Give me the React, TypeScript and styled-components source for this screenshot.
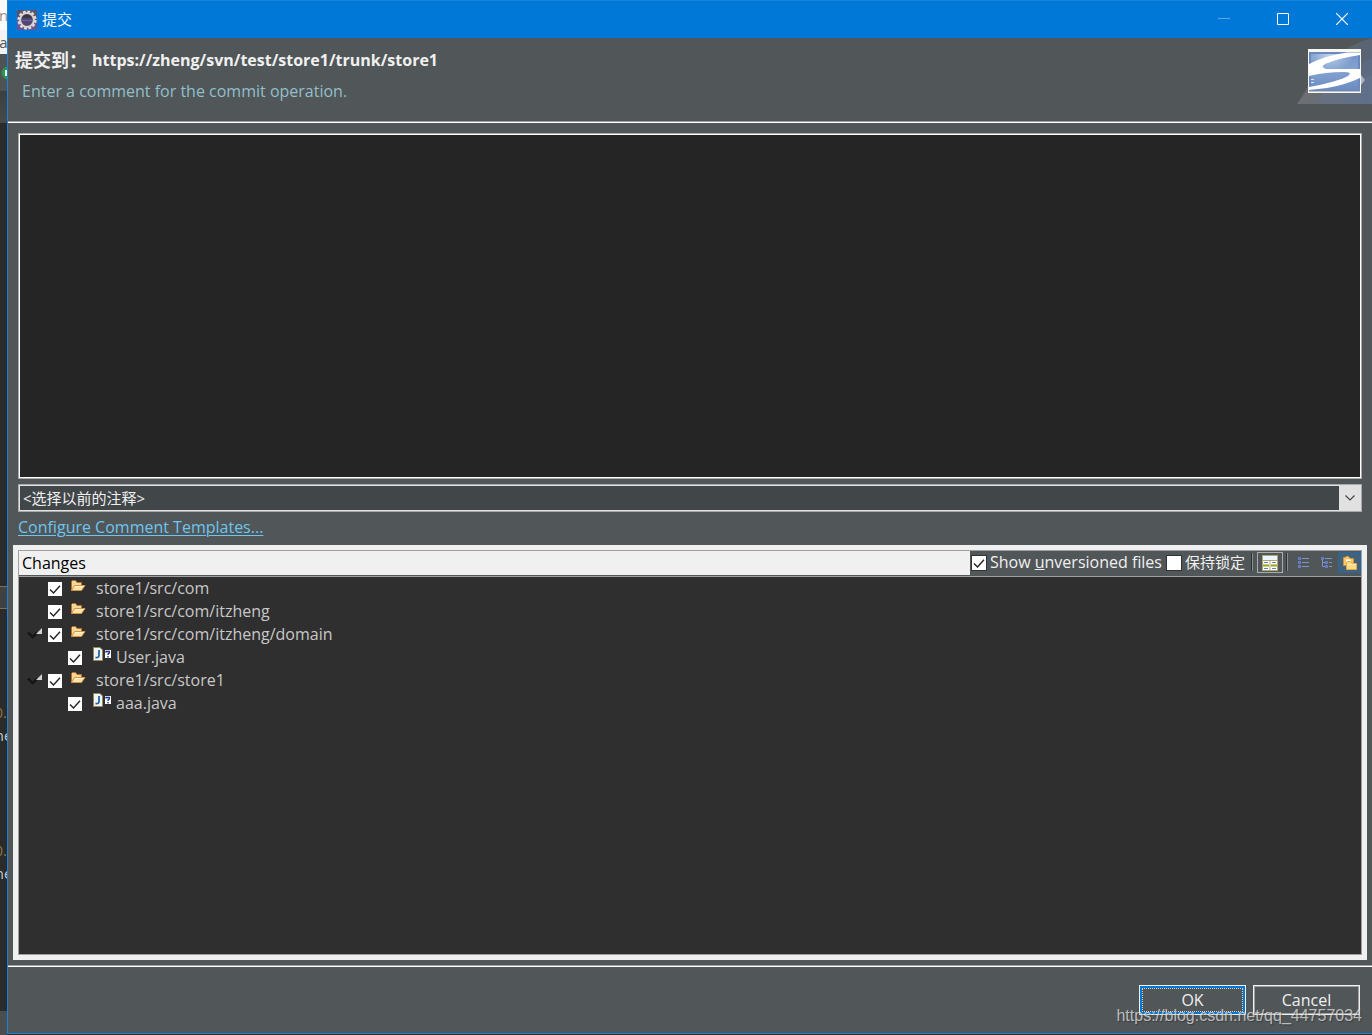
import React, { useState } from "react";
import styled, { createGlobalStyle, css } from "styled-components";

const uiFont = '"Open Sans", "Noto Sans CJK SC", sans-serif';

const GlobalStyle = createGlobalStyle`
  *, *::before, *::after { box-sizing: border-box; }
  body { margin: 0; background: #2b2b2b; font: 16px/23px ${uiFont}; color: #f0f0f0; }
  button, input, select, textarea { margin: 0; padding: 0; border-radius: 0; font: inherit; color: inherit; }
`;

const Screen = styled.div`
  display: flex;
  height: 100vh;
  min-height: 640px;
  overflow: hidden;
  position: relative;
`;

/* The sliver of the editor window that shows behind the dialog */
const Backdrop = styled.div`
  width: 7px;
  flex: none;
  display: flex;
  flex-direction: column;
  overflow: hidden;
  font-size: 15px;
`;

const Slab = styled.div<{ $h?: number; $bg: string; $ink?: string; $lined?: boolean; $end?: boolean }>`
  ${(p) => (p.$h ? css`flex: none; height: ${p.$h}px;` : css`flex: 1;`)}
  background: ${(p) => p.$bg};
  color: ${(p) => p.$ink || "#c8c8c8"};
  ${(p) => p.$lined && css`border: solid #77735a; border-width: 1px 0;`}
  display: flex;
  align-items: center;
  justify-content: ${(p) => (p.$end ? "flex-end" : "center")};
`;

const Dialog = styled.main`
  flex: 1;
  min-width: 0;
  display: flex;
  flex-direction: column;
  background: #515658;
  border: solid #1883d7;
  border-width: 1px 0 1px 1px;
  margin-bottom: 1px;
`;

const TitleBar = styled.header`
  height: 37px;
  flex: none;
  display: flex;
  align-items: center;
  gap: 5px;
  padding-left: 9px;
  background: #0078d7;
  color: #fff;
`;

const Caption = styled.span`
  flex: 1;
  font-size: 15px;
`;

const WindowControls = styled.div`
  display: flex;
`;

const WindowButton = styled.button`
  width: 59px;
  height: 37px;
  padding: 0 1px 1px 0;
  border: 0;
  background: none;
  display: grid;
  place-items: center;
  &:disabled { opacity: 0.35; }
`;

const Banner = styled.section`
  height: 83px;
  flex: none;
  display: flex;
  justify-content: space-between;
`;

const BannerText = styled.div`
  padding: 10px 0 0 7px;
`;

const Heading = styled.h1`
  display: flex;
  gap: 5px;
  margin: 0;
  font-size: 16px;
  line-height: 24px;
  font-weight: 700;
`;

const HeadingLabel = styled.span`
  font-size: 18px;
`;

const Hint = styled.p`
  margin: 8px 0 0 7px;
  color: #93bfca;
`;

const Rule = styled.hr`
  flex: none;
  width: 100%;
  height: 2px;
  margin: 0;
  border: solid;
  border-color: #a0a0a0 transparent #fff;
  border-width: 1px 0;
`;

const Content = styled.section`
  flex: 1;
  min-height: 0;
  display: grid;
  grid-template-rows: minmax(0, 346fr) 33px 33px minmax(0, 415fr);
  padding: 10px 5px 5px;
`;

const Field = styled.div`
  border: 1px solid #a9a9a9;
  margin: 0 5px;
`;

const CommentField = styled(Field)`
  display: flex;
`;

const Comment = styled.textarea`
  flex: 1;
  border: 1px solid #fff;
  padding: 2px;
  background: #252525;
  outline: 0;
  resize: none;
`;

const HistoryField = styled(Field)`
  margin-top: 5px;
  display: grid;
  grid-template-columns: 1fr 22px;
`;

const History = styled.select`
  grid-area: 1 / 1 / 2 / 3;
  appearance: none;
  border: 1px solid #e3e3e3;
  padding: 0 3px;
  background: #414649;
  outline: 0;
  font-size: 15px;
`;

const HistoryArrow = styled.span`
  grid-area: 1 / 2;
  display: grid;
  place-items: center;
  background: #e1e1e1;
  pointer-events: none;
`;

const TemplateRow = styled.div`
  padding: 4px 5px 0;
`;

const TemplateLink = styled.a`
  color: #6fc5ee;
  text-underline-offset: 2px;
  text-decoration-thickness: 1px;
`;

const ChangesPanel = styled.section`
  display: flex;
  background: #f0f0f0;
  padding: 5px;
`;

const ChangesFrame = styled.div`
  flex: 1;
  display: flex;
  flex-direction: column;
  border: 1px solid #a0a0a0;
  background: #2f2f2f;
`;

const ChangesHeader = styled.div`
  height: 26px;
  flex: none;
  display: flex;
  border-bottom: 1px solid #a0a0a0;
  background: #515658;
`;

const ChangesTitle = styled.h2`
  flex: 1;
  margin: 0;
  padding: 1px 3px 0;
  border-bottom: 1px solid #515658;
  background: #f0f0f0;
  color: #000;
  font-size: 16px;
  line-height: 23px;
  font-weight: 400;
`;

const Toolbar = styled.div`
  display: flex;
  align-items: flex-start;
  padding-left: 1px;
`;

const Option = styled.label`
  display: flex;
  align-items: center;
  gap: 3px;
  margin-right: 4px;
`;

const CjkText = styled.span`
  font-size: 15px;
`;

const CheckCell = styled.span<{ $size: number }>`
  flex: none;
  display: grid;
  place-items: center;
  width: ${(p) => p.$size}px;
  height: ${(p) => p.$size}px;
  > * { grid-area: 1 / 1; }
`;

const CheckInput = styled.input<{ $framed?: boolean }>`
  appearance: none;
  width: 100%;
  height: 100%;
  background: #fff;
  border: ${(p) => (p.$framed ? "1px solid #333" : "0")};
  & + svg { visibility: hidden; pointer-events: none; }
  &:checked + svg { visibility: visible; }
`;

const Divider = styled.span`
  width: 2px;
  height: 18px;
  margin: 2px 4px 0 2px;
  background: linear-gradient(to right, #303030 50%, #8a8d8f 50%);
`;

const ToolButton = styled.button<{ $look?: "framed" | "active" }>`
  display: grid;
  place-items: center;
  width: ${(p) => (p.$look === "framed" ? 26 : 23)}px;
  height: 21px;
  margin-top: 1px;
  border: 0 solid;
  background: none;
  ${(p) => p.$look === "framed" && css`margin-right: 1px; border: 1px solid #a9acad;`}
  ${(p) => p.$look === "active" && css`border: 1px solid #2a6699; background: #42617a;`}
`;

const Tree = styled.ul`
  list-style: none;
  margin: 0;
  padding: 0;
`;

const Row = styled.div<{ $depth: number }>`
  height: 23px;
  display: flex;
  align-items: center;
  padding-left: ${(p) => 8 + p.$depth * 20}px;
  color: #c8c8c8;
`;

const Twisty = styled.span`
  width: 21px;
  height: 23px;
  flex: none;
`;

const TwistyButton = styled.button`
  width: 21px;
  height: 23px;
  flex: none;
  border: 0;
  background: none;
  display: flex;
  justify-content: flex-start;
`;

const RowLabel = styled.label`
  display: flex;
  align-items: center;
  height: 23px;
`;

const RowIcon = styled.span`
  width: 26px;
  height: 23px;
  margin: 0 0 0 8px;
  svg { display: block; }
`;

const Footer = styled.footer`
  height: 66px;
  flex: none;
  display: flex;
  justify-content: flex-end;
  align-items: flex-start;
  gap: 7px;
  padding: 18px 12px 0;
`;

const ActionButton = styled.button<{ $primary?: boolean }>`
  width: 107px;
  height: 30px;
  padding: 1px;
  border: 1px solid #f0f0f0;
  background: #515658;
  box-shadow: inset 0 0 0 ${(p) => (p.$primary ? "2px #0078d7" : "1px #a0a0a0")};
`;

const FocusRing = styled.span<{ $on?: boolean }>`
  display: block;
  height: 26px;
  line-height: 26px;
  ${(p) => p.$on && css`height: 24px; line-height: 22px; margin: 0 1px; border: 1px dotted #d0d0d0;`}
`;

const Watermark = styled.span`
  position: absolute;
  right: 10px;
  bottom: 7px;
  font: 16px/24px "Liberation Sans", sans-serif;
  color: rgba(225, 225, 225, 0.75);
  text-shadow: 1px 1px 1px rgba(0, 0, 0, 0.3);
  pointer-events: none;
`;

function EclipseIcon() {
  return (
    <svg width="20" height="20" viewBox="0 0 20 20">
      <rect width="20" height="20" fill="#66549a" />
      <rect width="20" height="7" fill="#59536f" />
      <circle cx="10" cy="10" r="8.4" fill="none" stroke="#e2dcd2" strokeWidth="2.4" strokeDasharray="2.8 1.6" />
      <circle cx="10" cy="10" r="6.9" fill="#514776" stroke="#d8d4cd" strokeWidth="2" />
      <path d="M5 8a5.3 5.3 0 0 1 10 0z" fill="#3a3746" />
      <path d="M5 10.500h10" stroke="#6c6294" />
    </svg>
  );
}

function SubversiveLogo() {
  return (
    <svg width="75" height="66" viewBox="0 0 75 66">
      <defs>
        <linearGradient id="beam" x1="0" x2="1">
          <stop offset="0" stopColor="#737678" />
          <stop offset="0.5" stopColor="#676d76" />
          <stop offset="1" stopColor="#5d6c88" />
        </linearGradient>
        <linearGradient id="plate" x1="0" y1="0" x2="0" y2="1">
          <stop offset="0" stopColor="#7397c9" />
          <stop offset="0.45" stopColor="#86a3d0" />
          <stop offset="1" stopColor="#6c8dc3" />
        </linearGradient>
        <radialGradient id="glow" cx="0.4" cy="0" r="0.5">
          <stop offset="0" stopColor="#c1d3ec" />
          <stop offset="1" stopColor="#c1d3ec" stopOpacity="0" />
        </radialGradient>
      </defs>
      <path d="M0 66L20 34Q46 8 75 0V66z" fill="url(#beam)" opacity="0.6" />
      <path d="M0 66L22 40L75 21V66z" fill="url(#beam)" opacity="0.7" />
      <path d="M21 66L30 45L75 38V66z" fill="#677896" opacity="0.4" />
      <path d="M64 37l4 5l-4 5z" fill="#a9b5c8" />
      <rect x="11" y="11" width="53" height="44" fill="#f8f7f2" />
      <rect x="12" y="14" width="51" height="39" fill="#6b89bd" />
      <rect x="14" y="16" width="47" height="35" fill="url(#plate)" />
      <rect x="14" y="16" width="47" height="35" fill="url(#glow)" />
      <path
        d="M12 26Q30 17 50 14.500H63V17Q42 20 28 26Q23 29 29 31H63V40Q48 47 30 50L12 52V49Q40 44 51 38Q56 34 47 34Q28 34 12 38z"
        fill="#fff"
      />
      <path d="M14 41.500h3M14 44.500h3" stroke="#dce6f4" />
      <path d="M12 53.500h51" stroke="#c3c3be" />
    </svg>
  );
}

function Tick() {
  return (
    <svg width="14" height="14" viewBox="0 0 14 14">
      <path d="M2 7.500l3.500 3.500L12 3.800" fill="none" stroke="#222" strokeWidth="1.400" />
    </svg>
  );
}

function FolderIcon() {
  return (
    <svg width="16" height="23" viewBox="0 0 16 23">
      <path d="M1.500 13.500V4.500L2.500 3.500H5.500L7 5.500H11.500V8" fill="#f7d695" stroke="#b4712c" />
      <path d="M1.500 13.500L4.500 8.500H15L11.500 13.500z" fill="#ffe3a2" stroke="#d2944a" />
      <path d="M5 9.500h8.500" stroke="#fff4cf" />
    </svg>
  );
}

function JavaFileIcon() {
  return (
    <svg width="22" height="23" viewBox="0 0 22 23">
      <path d="M3.500 1.500H10L12.500 4V14.500H3.500z" fill="#eef5fd" stroke="#9a8850" />
      <path d="M9 4V9.500Q9 12 5.500 11.500" fill="none" stroke="#2c6597" strokeWidth="1.800" />
      <rect x="15" y="4" width="6" height="8" fill="#fff" />
      <path d="M16 6.500V5.500H19.300V7L18 8V9M18 10v1.500" fill="none" stroke="#1c2f96" strokeWidth="1.400" />
    </svg>
  );
}

function ExpandedIcon() {
  return (
    <svg width="16" height="23" viewBox="0 0 16 23">
      <path d="M1 9.500l4.500 4.500l5-4.500" fill="none" stroke="#151515" strokeWidth="2.400" />
      <path d="M15 5v6H9z" fill="#d2d2d2" />
    </svg>
  );
}

function CompareIcon() {
  return (
    <svg width="16" height="16" viewBox="0 0 16 16">
      <rect width="16" height="16" fill="#b1a878" />
      <rect x="1" y="1" width="14" height="4" fill="#eaf6fc" />
      <path d="M1 6h6.500v9H1zM8.500 6H15v9H8.500z" fill="#fff" />
      <path d="M2 7.500h4M10 7.500h4M2 13.500h4M10 13.500h4" stroke="#638cab" />
      <path d="M1 10.500h6M9 10.500h6" stroke="#96a614" strokeWidth="2" />
    </svg>
  );
}

function FlatIcon() {
  return (
    <svg width="12" height="13" viewBox="0 0 12 13">
      <path d="M0 1h3v3H0zM0 5h3v3H0zM0 9h3v3H0z" fill="#637bc0" />
      <path d="M4 2.500h7M4 6.500h7M4 10.500h7" stroke="#7e96bd" />
    </svg>
  );
}

function HierarchyIcon() {
  return (
    <svg width="12" height="13" viewBox="0 0 12 13">
      <path d="M0 1h3v3H0zM4 5h3v3H4zM4 9h3v3H4z" fill="#637bc0" />
      <path d="M4 2.500h7M8 6.500h3M8 10.500h3M1.500 4v6.500H4M1.500 6.500H4" fill="none" stroke="#7e96bd" />
    </svg>
  );
}

function CompressedIcon() {
  return (
    <svg width="16" height="16" viewBox="0 0 16 16">
      <path d="M1.500 10.500V2.500H3L4 1.500H6.500L8 3.500H11.500V10.500z" fill="#f7c76b" stroke="#d2933d" />
      <path d="M4 5.500h5" stroke="#fff" strokeWidth="2" />
      <path d="M4.500 14.500V7.500L5.500 6.500H8.500L10 8.500H14.500V14.500z" fill="#ffdb82" stroke="#e8aa48" />
      <path d="M5 9.500h9" stroke="#fff1b6" />
    </svg>
  );
}

type CheckProps = { size: number; framed?: boolean; initial?: boolean; id?: string };

function Check({ size, framed, initial = false, id }: CheckProps) {
  const [on, setOn] = useState(initial);
  return (
    <CheckCell $size={size}>
      <CheckInput id={id} type="checkbox" $framed={framed} checked={on} onChange={() => setOn(!on)} />
      <Tick />
    </CheckCell>
  );
}

type Node = { name: string; children?: Node[] };

const changes: Node[] = [
  { name: "store1/src/com", children: [] },
  { name: "store1/src/com/itzheng", children: [] },
  { name: "store1/src/com/itzheng/domain", children: [{ name: "User.java" }] },
  { name: "store1/src/store1", children: [{ name: "aaa.java" }] },
];

function TreeItem({ node, depth = 0 }: { node: Node; depth?: number }) {
  const [open, setOpen] = useState(true);
  const hasChildren = !!node.children?.length;
  return (
    <li>
      <Row $depth={depth}>
        {hasChildren ? (
          <TwistyButton type="button" aria-expanded={open} aria-label={node.name} onClick={() => setOpen(!open)}>
            <ExpandedIcon />
          </TwistyButton>
        ) : (
          <Twisty />
        )}
        <Check size={14} initial id={node.name} />
        <RowLabel htmlFor={node.name}>
          <RowIcon>{node.children ? <FolderIcon /> : <JavaFileIcon />}</RowIcon>
          {node.name}
        </RowLabel>
      </Row>
      {hasChildren && open && (
        <Tree>
          {node.children!.map((child) => (
            <TreeItem key={child.name} node={child} depth={depth + 1} />
          ))}
        </Tree>
      )}
    </li>
  );
}

export default function App() {
  return (
    <Screen>
      <GlobalStyle />
      <Backdrop aria-hidden="true">
        <Slab $h={30} $bg="#fafafa" $ink="#a08c86">n</Slab>
        <Slab $h={24} $bg="#f2f2f2" $ink="#555">a</Slab>
        <Slab $h={37} $bg="#4f5355">
          <svg width="7" height="14" viewBox="0 0 7 14">
            <circle cx="8" cy="7" r="6.500" fill="#2f9447" />
            <path d="M6 4v6" stroke="#e6f5e8" strokeWidth="2" />
          </svg>
        </Slab>
        <Slab $h={32} $bg="linear-gradient(#3c3f41, #47494b)" />
        <Slab $h={463} $bg="#2b2b2b" />
        <Slab $h={23} $bg="#414141" $lined />
        <Slab $h={92} $bg="#2b2b2b" />
        <Slab $h={23} $bg="#2b2b2b" $ink="#8c7440" $end>0.</Slab>
        <Slab $h={23} $bg="#2b2b2b">ne</Slab>
        <Slab $h={92} $bg="#2b2b2b" />
        <Slab $h={23} $bg="#2b2b2b" $ink="#8c7440" $end>0.</Slab>
        <Slab $h={23} $bg="#2b2b2b">ne</Slab>
        <Slab $bg="#2b2b2b" />
        <Slab $h={24} $bg="#4a4e50" />
      </Backdrop>

      <Dialog>
        <TitleBar>
          <EclipseIcon />
          <Caption>提交</Caption>
          <WindowControls>
            <WindowButton type="button" disabled aria-label="Minimize">
              <svg width="12" height="12"><path d="M0 5.500h12" stroke="#fff" /></svg>
            </WindowButton>
            <WindowButton type="button" aria-label="Maximize">
              <svg width="12" height="12"><path d="M.5.5h11v11H.5z" fill="none" stroke="#fff" /></svg>
            </WindowButton>
            <WindowButton type="button" aria-label="Close">
              <svg width="12" height="12"><path d="M0 0l12 12M12 0L0 12" stroke="#fff" strokeWidth="1.200" /></svg>
            </WindowButton>
          </WindowControls>
        </TitleBar>

        <Banner>
          <BannerText>
            <Heading>
              <HeadingLabel>提交到：</HeadingLabel>
              <span>https://zheng/svn/test/store1/trunk/store1</span>
            </Heading>
            <Hint>Enter a comment for the commit operation.</Hint>
          </BannerText>
          <SubversiveLogo />
        </Banner>
        <Rule />

        <Content>
          <CommentField>
            <Comment aria-label="Comment" />
          </CommentField>
          <HistoryField>
            <History aria-label="Previous comments">
              <option>&lt;选择以前的注释&gt;</option>
            </History>
            <HistoryArrow>
              <svg width="10" height="6"><path d="M.5.5L5 5L9.500.5" fill="none" stroke="#444" strokeWidth="1.200" /></svg>
            </HistoryArrow>
          </HistoryField>
          <TemplateRow>
            <TemplateLink href="#templates">Configure Comment Templates...</TemplateLink>
          </TemplateRow>

          <ChangesPanel>
            <ChangesFrame>
              <ChangesHeader>
                <ChangesTitle>Changes</ChangesTitle>
                <Toolbar>
                  <Option>
                    <Check size={16} framed initial />
                    <span>Show <u>u</u>nversioned files</span>
                  </Option>
                  <Option>
                    <Check size={16} framed />
                    <CjkText>保持锁定</CjkText>
                  </Option>
                  <Divider />
                  <ToolButton type="button" $look="framed" aria-label="Compare pane"><CompareIcon /></ToolButton>
                  <Divider />
                  <ToolButton type="button" aria-label="Flat"><FlatIcon /></ToolButton>
                  <ToolButton type="button" aria-label="Hierarchical"><HierarchyIcon /></ToolButton>
                  <ToolButton type="button" $look="active" aria-label="Compressed folders"><CompressedIcon /></ToolButton>
                </Toolbar>
              </ChangesHeader>
              <Tree>
                {changes.map((node) => (
                  <TreeItem key={node.name} node={node} />
                ))}
              </Tree>
            </ChangesFrame>
          </ChangesPanel>
        </Content>

        <Rule />
        <Footer>
          <ActionButton type="button" $primary><FocusRing $on>OK</FocusRing></ActionButton>
          <ActionButton type="button"><FocusRing>Cancel</FocusRing></ActionButton>
        </Footer>
      </Dialog>
      <Watermark>https://blog.csdn.net/qq_44757034</Watermark>
    </Screen>
  );
}
